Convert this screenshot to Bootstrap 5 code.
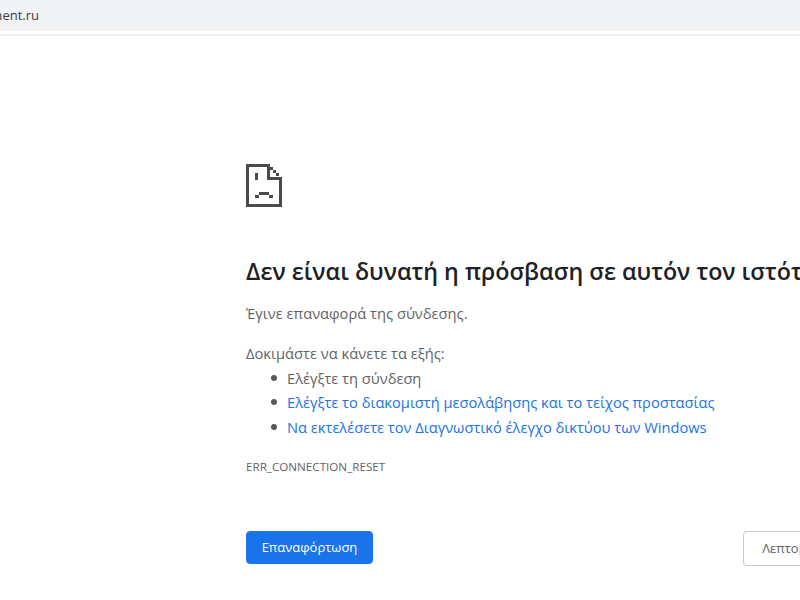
<!DOCTYPE html>
<html lang="el">
<head>
<meta charset="utf-8">
<title>Σφάλμα</title>
<link href="https://cdn.jsdelivr.net/npm/bootstrap@5.3.0/dist/css/bootstrap.min.css" rel="stylesheet">
<style>
html, body { height: 600px; overflow: hidden; }
body { font-family: "Open Sans", "Noto Sans", sans-serif; background: #fff; color: #5f6368; }
.addr-strip { height: 31px; background: #f1f3f4; }
.addr-text { width: 39px; height: 31px; overflow: hidden; font-size: 13px; color: #3c4043; white-space: nowrap; }
.addr-rule { height: 2px; margin-top: 3px; background: #eeeff0; }
.err-wrap { padding: 128px 0 0 246px; width: 1000px; }
.err-icon { display: block; width: 36px; height: 43px; }
.err-title { font-size: 23.25px; font-weight: 550; color: #202124; line-height: 28px; margin: 50px 0 0; white-space: nowrap; }
.err-line { font-size: 14.7px; line-height: 20px; margin: 0; }
.err-reason { margin-top: 18px; }
.err-try { margin-top: 20px; }
.err-list { list-style: none; margin: 0; padding: 3px 0 0 41px; font-size: 14.65px; line-height: 24.3px; }
.err-list li { position: relative; }
.err-list li::before { content: ""; position: absolute; left: -16px; top: 9px; width: 6px; height: 6px; border-radius: 50%; background: #55585c; }
.err-list a { color: #1a73e8; text-decoration: none; }
.err-code { font-size: 11.65px; line-height: 16px; margin-top: 20px; }
.err-actions { margin-top: 56px; width: 617px; }
.btn-reload { background: #1a73e8; border-color: #1a73e8; color: #fff; font-size: 13px; font-weight: 500; height: 33px; width: 127px; padding: 0; border-radius: 4px; }
.btn-more { background: #fff; border: 1px solid #c4c7cc; color: #5f6368; font-size: 13px; font-weight: 500; height: 35px; width: 120px; padding: 0; border-radius: 4px; }
</style>
</head>
<body>
<div class="addr-strip d-flex align-items-center">
  <div class="addr-text d-flex justify-content-end align-items-center">ment.ru</div>
</div>
<div class="addr-rule"></div>
<main class="err-wrap">
  <svg class="err-icon" viewBox="0 0 36 43" aria-hidden="true" fill="#4a4a4e">
    <path d="M0 0H24V3H3V40H33V16H21V0H24V13H36V43H0Z"/>
    <rect x="24" y="3" width="3" height="3"/>
    <rect x="27" y="6" width="3" height="3"/>
    <rect x="30" y="9" width="3" height="3"/>
    <rect x="9" y="9" width="3" height="7"/>
    <rect x="13" y="28" width="10" height="3"/>
    <rect x="9" y="31" width="4" height="3"/>
    <rect x="23" y="31" width="4" height="3"/>
  </svg>
  <h1 class="err-title">Δεν είναι δυνατή η πρόσβαση σε αυτόν τον ιστότοπο</h1>
  <p class="err-line err-reason">Έγινε επαναφορά της σύνδεσης.</p>
  <p class="err-line err-try">Δοκιμάστε να κάνετε τα εξής:</p>
  <ul class="err-list">
    <li>Ελέγξτε τη σύνδεση</li>
    <li><a href="#">Ελέγξτε το διακομιστή μεσολάβησης και το τείχος προστασίας</a></li>
    <li><a href="#">Να εκτελέσετε τον Διαγνωστικό έλεγχο δικτύου των Windows</a></li>
  </ul>
  <div class="err-code">ERR_CONNECTION_RESET</div>
  <div class="err-actions d-flex justify-content-between align-items-start">
    <button type="button" class="btn btn-primary btn-reload">Επαναφόρτωση</button>
    <button type="button" class="btn btn-more">Λεπτομέρειες</button>
  </div>
</main>
<script src="https://cdn.jsdelivr.net/npm/bootstrap@5.3.0/dist/js/bootstrap.bundle.min.js"></script>
</body>
</html>
